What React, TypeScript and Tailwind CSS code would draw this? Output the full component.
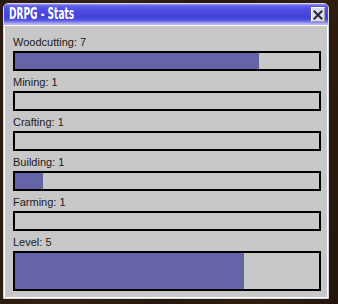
import React from "react";

type Stat = { label: string; pct: number };

const stats: Stat[] = [
  { label: "Woodcutting: 7", pct: 80.3 },
  { label: "Mining: 1", pct: 0 },
  { label: "Crafting: 1", pct: 0 },
  { label: "Building: 1", pct: 9.2 },
  { label: "Farming: 1", pct: 0 },
];

function Bar({ pct, tall }: { pct: number; tall?: boolean }) {
  return (
    <div
      className={`w-[308px] ${tall ? "h-[40px]" : "h-[20px]"} border-2 border-black bg-[#c8c8c8] flex`}
    >
      <div className="h-full bg-[#6464a6]" style={{ width: `${pct}%` }} />
    </div>
  );
}

export default function App() {
  return (
    <div className="w-[338px] h-[304px] bg-[linear-gradient(100deg,#2a1a10_0%,#332114_30%,#26170e_55%,#31200f_80%,#24150c_100%)] pt-[3px] pl-[3px]">
      <div className="w-[326px] h-[296px] flex flex-col border border-[#d6d6de] rounded-t-[5px] overflow-hidden">
        <div className="h-[21px] shrink-0 flex items-start justify-between pl-[5px] pr-[3px] pt-[3px] bg-[linear-gradient(to_bottom,#9a9af6_0px,#6060ea_2px,#4c4ce2_6px,#4242da_13px,#5050e0_16px,#8080ec_18px,#b4b4f4_20px)]">
          <span
            className="text-white font-bold text-[15px] leading-[14px] origin-left scale-x-[0.67] whitespace-nowrap"
            style={{ fontFamily: '"DejaVu Sans Condensed", "DejaVu Sans", sans-serif' }}
          >
            DRPG - Stats
          </span>
          <div className="w-[14px] h-[15px] bg-[#dcdcea] border-t border-l border-white border-r border-b border-r-[#9c9cb4] border-b-[#9c9cb4] flex items-center justify-center">
            <svg width="10" height="10" viewBox="0 0 10 10">
              <path d="M1.5 1.5 L8.5 8.5 M8.5 1.5 L1.5 8.5" stroke="#2a2a2a" strokeWidth="2" strokeLinecap="square" />
            </svg>
          </div>
        </div>
        <div
          className="flex-1 bg-[#c8c8c8] border border-white pt-[10px] pl-[8px] pr-[6px] flex flex-col gap-[5px]"
          style={{ fontFamily: '"Liberation Sans", Arial, sans-serif' }}
        >
          {stats.map((s) => (
            <div key={s.label} className="flex flex-col gap-[2px]">
              <div className="text-[11px] leading-[13px] text-[#1a1a1a]">{s.label}</div>
              <Bar pct={s.pct} />
            </div>
          ))}
          <div className="flex flex-col gap-[2px]">
            <div className="text-[11px] leading-[13px] text-[#1a1a1a]">Level: 5</div>
            <Bar pct={75.3} tall />
          </div>
        </div>
      </div>
    </div>
  );
}
